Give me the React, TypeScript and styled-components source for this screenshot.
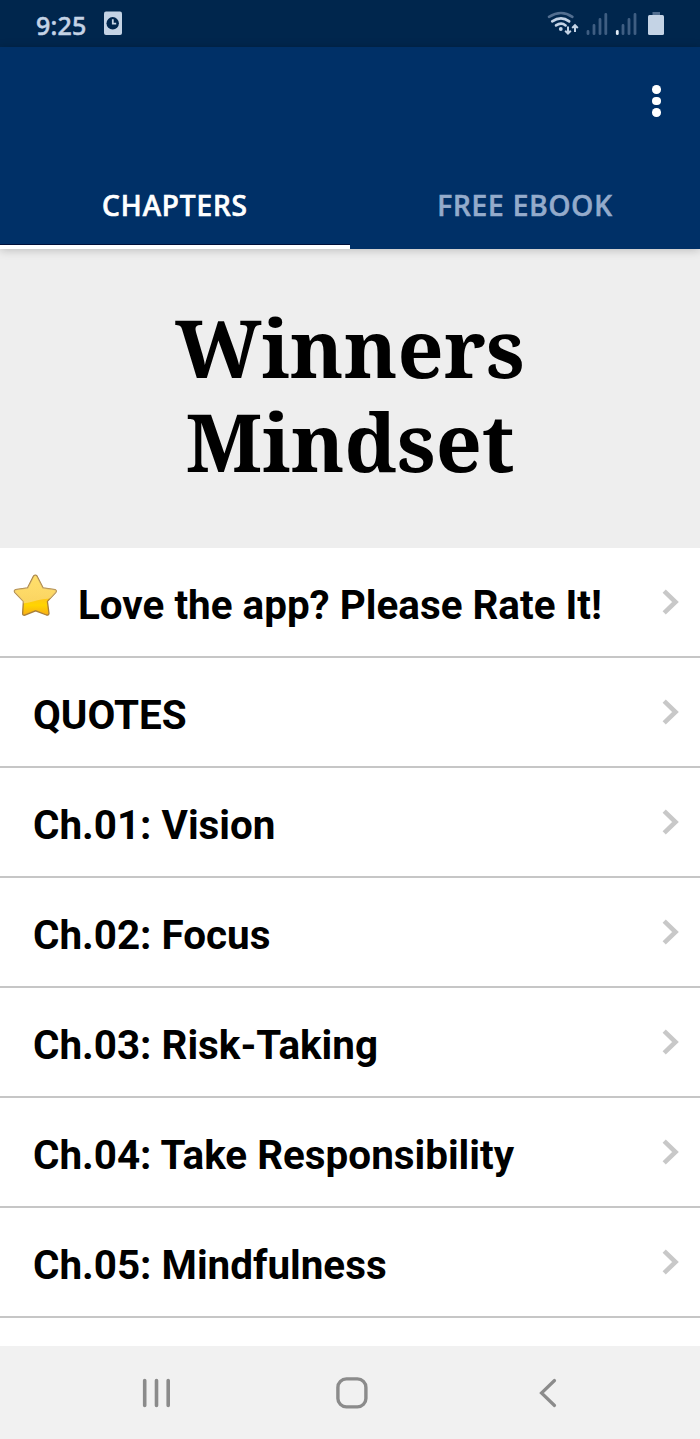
import React from 'react';
import styled, { createGlobalStyle } from 'styled-components';

const Global = createGlobalStyle`
  * { box-sizing: border-box; }
  body { margin: 0; background: #fff; }
`;

const Screen = styled.div`
  width: 700px;
  height: 1439px;
  display: flex;
  flex-direction: column;
  overflow: hidden;
  background: #fff;
  color: #000;
  font-family: Roboto, sans-serif;
`;

const StatusBar = styled.div`
  flex: none;
  height: 47px;
  display: flex;
  align-items: center;
  background: #00264d;
  color: #c4d3e5;
  padding-left: 36px;
`;

const Clock = styled.span`
  width: 67px;
  padding-top: 2px;
  font: 500 25px/30px "Noto Sans", sans-serif;
  letter-spacing: 0.2px;
  -webkit-text-stroke: 0.5px currentColor;
`;

const StatusIcons = styled.svg`
  margin-left: auto;
  display: block;
`;

const AppBar = styled.header`
  flex: none;
  position: relative;
  height: 202px;
  display: flex;
  flex-direction: column;
  background: #003067;
  box-shadow: 0 1px 9px rgba(0, 0, 0, 0.22);
`;

const Toolbar = styled.div`
  height: 108px;
  display: flex;
  align-items: center;
  justify-content: flex-end;
  padding-right: 39px;
`;

const MenuButton = styled.button`
  display: flex;
  flex-direction: column;
  gap: 3px;
  padding: 0;
  border: 0;
  background: none;
`;

const Dot = styled.span`
  width: 8.6px;
  height: 8.6px;
  border-radius: 50%;
  background: #fff;
`;

const Tabs = styled.nav`
  flex: 1;
  display: flex;
`;

const Tab = styled.div<{ $active?: boolean }>`
  flex: 1;
  display: flex;
  justify-content: center;
  padding-top: 31px;
  font: 500 28px/38px "Noto Sans", sans-serif;
  letter-spacing: 0.9px;
  white-space: nowrap;
  -webkit-text-stroke: 0.7px currentColor;
  color: ${(p) => (p.$active ? '#fff' : '#94abcb')};
  border-bottom: ${(p) => (p.$active ? '4px solid #fff' : '0')};
  box-shadow: ${(p) => (p.$active ? 'inset 0 -1px 0 #00103a' : 'none')};
`;

const Hero = styled.section`
  flex: none;
  height: 299px;
  padding-top: 51px;
  background: #eee;
`;

const Title = styled.h1`
  margin: 0;
  display: flex;
  flex-direction: column;
  align-items: center;
  font: 700 80.7px/94px "Noto Serif", "DejaVu Serif Condensed", "DejaVu Serif", serif;
`;

const List = styled.main`
  flex: 1;
  min-height: 0;
  overflow: hidden;
`;

const Row = styled.div`
  height: 110px;
  display: flex;
  align-items: center;
  padding: 8px 20px 0 33px;
  border-bottom: 2px solid #c6c6c6;
`;

const RowLabel = styled.span`
  flex: 1;
  white-space: nowrap;
  font: 700 40.4px/48px Roboto, sans-serif;
`;

const Star = styled.svg`
  flex: none;
  margin: -21px 20px 0 -20px;
`;

const Chevron = styled.svg`
  flex: none;
  margin-top: -8px;
`;

const NavBar = styled.footer`
  flex: none;
  height: 93px;
  background: #f1f1f1;
  display: flex;
  align-items: center;
  padding: 1px 0 0 141px;
`;

const NavIcon = styled.svg<{ $gap?: number }>`
  flex: none;
  margin-left: ${(p) => p.$gap ?? 0}px;
`;

const chapters = [
  'QUOTES',
  'Ch.01: Vision',
  'Ch.02: Focus',
  'Ch.03: Risk-Taking',
  'Ch.04: Take Responsibility',
  'Ch.05: Mindfulness',
];

const starPath =
  'M20.6 3q1.8-1.8 3.400 0l6 11.800 12 1.800q2 .8.8 2.800L34.400 28.400l1.600 12q-.4 2.200-2.600 1.600L22.600 37.800 12 42.200q-2.400.4-2.400-1.800l.8-12L1.800 19.400q-1.200-2 .8-2.800L14.600 14.800z';

const RowArrow = () => (
  <Chevron width="18" height="26" viewBox="0 0 18 26">
    <path d="M2.200 2.200 13.500 13 2.200 23.800" fill="none" stroke="#c8c8c8" strokeWidth="4.600" />
  </Chevron>
);

export default function App() {
  return (
    <Screen>
      <Global />
      <StatusBar>
        <Clock>9:25</Clock>
        <svg width="20" height="26" viewBox="0 0 20 26">
          <rect x="1" y="0.500" width="18" height="23.500" rx="2" fill="#c4d3e5" />
          <circle cx="9.700" cy="12.300" r="6.200" fill="#00264d" />
          <path d="M9.800 8.300v4.400h3.400" fill="none" stroke="#c4d3e5" strokeWidth="1.800" />
        </svg>
        <StatusIcons width="153" height="47" viewBox="547 0 153 47">
          <g fill="none" strokeWidth="2.600" strokeLinecap="round">
            <path d="M549 16.800q12.300-7.500 23.400 0" stroke="#526e90" />
            <path d="M552.200 21.400q9-6 17 0M556 25.400q5.200-3.600 9.600 0" stroke="#c4d3e5" />
          </g>
          <circle cx="560.800" cy="29" r="1.900" fill="#c4d3e5" />
          <path d="M568 26.500v6.800M565.200 30.800l2.800 2.800 2.800-2.800M575 32v-6.500M572.200 28l2.800-2.800 2.800 2.800" fill="none" stroke="#c4d3e5" strokeWidth="2" />
          <g stroke="#3f5e82" strokeWidth="2.800" strokeLinecap="round">
            <path d="M588 31.500v2.200M594 25.500v8.200M600 19.500v14.200M605.800 14.500v19.200" />
            <path d="M623 25.500v8.200M629 19.500v14.200M635 14.500v19.200" />
            <path d="M617.300 31.500v2.200" stroke="#e2edf8" />
          </g>
          <path d="M652.500 12h7.500v3h-7.500z" fill="#526e90" />
          <rect x="648" y="15" width="16" height="20" rx="1.500" fill="#c4d3e5" />
        </StatusIcons>
      </StatusBar>
      <AppBar>
        <Toolbar>
          <MenuButton aria-label="More options">
            <Dot />
            <Dot />
            <Dot />
          </MenuButton>
        </Toolbar>
        <Tabs>
          <Tab $active>CHAPTERS</Tab>
          <Tab>FREE EBOOK</Tab>
        </Tabs>
      </AppBar>
      <Hero>
        <Title>
          <span>Winners</span>
          <span>Mindset</span>
        </Title>
      </Hero>
      <List>
        <Row>
          <Star width="45" height="45" viewBox="0 0 45 45">
            <defs>
              <linearGradient id="gold" x1="0" y1="0" x2="0" y2="1">
                <stop offset="0" stopColor="#ffd84a" />
                <stop offset="0.600" stopColor="#ffc814" />
                <stop offset="0.750" stopColor="#ffd500" />
                <stop offset="1" stopColor="#f8ac18" />
              </linearGradient>
              <linearGradient id="shine" x1="0" y1="0" x2="0" y2="1">
                <stop offset="0" stopColor="#fff" stopOpacity="0.150" />
                <stop offset="1" stopColor="#f6dc98" stopOpacity="0.600" />
              </linearGradient>
              <clipPath id="starShape">
                <path d={starPath} />
              </clipPath>
            </defs>
            <path d={starPath} fill="url(#gold)" stroke="#a9803a" strokeWidth="1.300" />
            <path d="M0 0h45v25Q28 26 20 28.500T0 31z" fill="url(#shine)" clipPath="url(#starShape)" />
          </Star>
          <RowLabel>Love the app? Please Rate It!</RowLabel>
          <RowArrow />
        </Row>
        {chapters.map((name) => (
          <Row key={name}>
            <RowLabel>{name}</RowLabel>
            <RowArrow />
          </Row>
        ))}
      </List>
      <NavBar>
        <NavIcon width="32" height="32" viewBox="0 0 32 32">
          <path d="M3.700 3.500v25M15.500 3.500v25M27.200 3.500v25" stroke="#8b8b8b" strokeWidth="3.600" strokeLinecap="round" />
        </NavIcon>
        <NavIcon $gap={163} width="32" height="32" viewBox="0 0 32 32">
          <rect x="1.900" y="1.900" width="28" height="28" rx="8.500" fill="none" stroke="#8b8b8b" strokeWidth="3.400" />
        </NavIcon>
        <NavIcon $gap={170} width="20" height="32" viewBox="0 0 20 32">
          <path d="M16.500 3.500 3.500 16l13 12.500" fill="none" stroke="#8b8b8b" strokeWidth="3.200" strokeLinecap="round" />
        </NavIcon>
      </NavBar>
    </Screen>
  );
}
